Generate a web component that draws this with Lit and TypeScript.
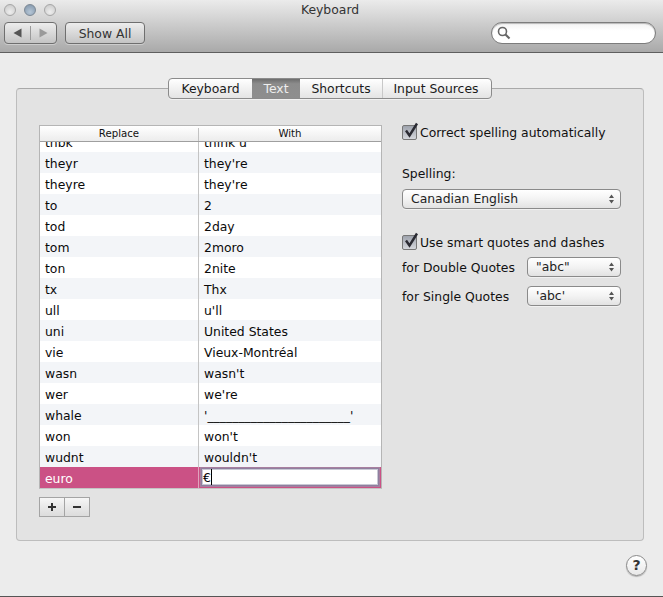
import { LitElement, html, css, svg } from "lit";
import { customElement } from "lit/decorators.js";

const rows: [string, string][] = [
  ["thbk", "think u"], ["theyr", "they're"], ["theyre", "they're"], ["to", "2"], ["tod", "2day"],
  ["tom", "2moro"], ["ton", "2nite"], ["tx", "Thx"], ["ull", "u'll"], ["uni", "United States"],
  ["vie", "Vieux-Montréal"], ["wasn", "wasn't"], ["wer", "we're"], ["whale", "'_______________________'"],
  ["won", "won't"], ["wudnt", "wouldn't"],
];

const stepper = svg`<svg class="step" width="7" height="12" viewBox="0 0 7 12"><path d="M3.5 1.5 L6 5 H1Z M3.5 10.5 L1 7 H6Z" fill="#555"/></svg>`;
const check = svg`<svg class="check" width="18" height="18" viewBox="0 0 18 18"><path d="M4 8.5 L7.5 13.5 L15 1.5" fill="none" stroke="#2b2b33" stroke-width="2.4"/></svg>`;

@customElement("app-root")
export class AppRoot extends LitElement {
  static styles = css`
    :host { display: flex; flex-direction: column; width: 663px; height: 597px; background: #ececec; overflow: hidden;
      font-family: "DejaVu Sans", "Noto Sans", sans-serif; font-size: 12.4px; color: #111; box-sizing: border-box; border-bottom: 1px solid #555; }
    * { box-sizing: border-box; }
    .titlebar { height: 53px; flex: none; background: linear-gradient(#ebebeb, #d4d4d4 35%, #a9a9a9); border-bottom: 1px solid #5f5f5f; position: relative; display: flex; flex-direction: column; padding: 2px 7px 0 4px; }
    .top { height: 20px; display: flex; align-items: center; position: relative; }
    .lights { display: flex; gap: 8px; margin-top: -5px; }
    .light { width: 12px; height: 12px; border-radius: 50%; border: 1px solid #a6a6a6; background: radial-gradient(circle at 50% 70%, #eeeeee, #c6c6c6); }
    .light.mid { background: radial-gradient(circle at 50% 70%, #b5c6d6, #7f93a8); border-color: #7c8894; }
    .title { position: absolute; left: 0; right: 0; top: 0; text-align: center; font-size: 12.4px; line-height: 15px; color: #333; }
    .tools { display: flex; align-items: center; height: 22px; }
    .tbtn { height: 22px; border: 1px solid #6f6f6f; border-radius: 4px; background: linear-gradient(#ededed, #c4c4c4); box-shadow: 0 1px 0 rgba(255,255,255,.35); display: flex; align-items: center; justify-content: center; color: #333; }
    .nav { width: 53px; margin-right: 8px; }
    .nav svg { flex: 1; }
    .nav i { width: 1px; height: 14px; background: #9a9a9a; }
    .show { width: 80px; }
    .search { margin-left: auto; width: 165px; height: 22px; border: 1px solid #7c7c7c; border-radius: 11px; background: linear-gradient(#f2f2f2, #fff 40%); box-shadow: inset 0 1px 1px rgba(0,0,0,.25); display: flex; align-items: center; padding-left: 5px; }
    .main { flex: 1; padding: 25px 19px 0 16px; display: flex; flex-direction: column; }
    .tabs { align-self: center; height: 21px; display: flex; position: relative; z-index: 1; border: 1px solid #8b8b8b; border-radius: 4px; background: linear-gradient(#fff, #f1f1f1 50%, #e4e4e4); box-shadow: 0 1px 0 rgba(255,255,255,.5); line-height: 19px; }
    .tab { text-align: center; color: #1a1a1a; border-left: 1px solid #c8c8c8; }
    .tab:first-child { border-left: none; }
    .tab.on { background: linear-gradient(#6d6d6d, #8c8c8c 25%, #8e8e8e); color: #eee; border-left: none; }
    .tab.on + .tab { border-left: none; }
    .t1 { width: 83px; } .t2 { width: 48px; } .t3 { width: 82px; } .t4 { width: 109px; padding-right: 2px; }
    .panel { height: 453px; margin-top: -11px; background: #e3e3e3; border: 1px solid #bdbdbd; border-top-color: #a9a9a9; border-radius: 4px; padding: 36px 22px 0 22px; display: flex; }
    .left { width: 343px; flex: none; margin-right: 20px; }
    .table { height: 364px; border: 1px solid #b5b5b5; border-bottom-color: #c4c4c4; background: #fff; display: flex; flex-direction: column; overflow: hidden; }
    .thead { height: 16px; flex: none; display: grid; grid-template-columns: 158px 1fr; background: linear-gradient(#fff, #ececec); border-bottom: 1px solid #9f9f9f; font-size: 10.2px; line-height: 15px; text-align: center; }
    .thead div + div { border-left: 1px solid #c2c2c2; height: 13px; margin-top: 2px; line-height: 12px; }
    .body { flex: 1; min-height: 0; overflow: hidden; display: flex; flex-direction: column; justify-content: flex-end; }
    .row { height: 21px; flex: none; display: grid; grid-template-columns: 158px 1fr; line-height: 21px; color: #0a0a0a; background: #fff; }
    .row.alt { background: #f3f5f8; }
    .row div { padding: 1px 0 0 5px; white-space: nowrap; }
    .row div + div { border-left: 1px solid #c4c4c4; }
    .row.sel { background: #cb5185; color: #fff; }
    .row.sel div + div { border-left: 1px solid #e0a3bd; padding: 0 1px 1px 1px; }
    .edit { display: block; height: 20px; border: 2px solid #8f7f9f; outline: 1px solid #a77f9f; outline-offset: -1px; background: #fff; color: #000; line-height: 17px; padding-left: 1px; box-shadow: inset 0 0 0 1px #c8c8d4; }
    .edit b { display: inline-block; width: 1px; height: 16px; background: #000; vertical-align: top; font-weight: normal; }
    .pm { display: inline-flex; margin-top: 8px; border: 1px solid #a4a4a4; height: 20px; background: linear-gradient(#f6f6f6, #e8e8e8 50%, #dcdcdc); }
    .pm div { width: 24px; display: flex; align-items: center; justify-content: center; }
    .pm div + div { border-left: 1px solid #a4a4a4; width: 25px; }
    .right { width: 219px; flex: none; margin-top: -2px; }
    .cb { display: flex; align-items: center; height: 18px; gap: 3px; }
    .box { width: 15px; height: 15px; border: 1px solid #777; border-radius: 2px; background: linear-gradient(#9ea3ad, #d5d7dc); position: relative; flex: none; }
    .check { position: absolute; left: -1px; top: -4px; }
    .spell { margin-top: 25px; height: 16px; line-height: 16px; }
    .sel-box { height: 20px; border: 1px solid #8a8a8a; border-radius: 4px; background: linear-gradient(#fff, #f3f3f3 50%, #e2e2e2); box-shadow: 0 1px 0 rgba(255,255,255,.5); display: flex; align-items: center; padding: 0 5px 0 8px; justify-content: space-between; line-height: 18px; color: #222; }
    .full { margin-top: 7px; }
    .cb.second { margin-top: 24px; }
    .q { display: flex; align-items: center; justify-content: space-between; height: 20px; margin-top: 6px; }
    .q + .q { margin-top: 9px; }
    .q .sel-box { width: 94px; }
    .foot { display: flex; justify-content: flex-end; padding-top: 14px; margin-right: -3px; }
    .help { width: 21px; height: 21px; border-radius: 50%; border: 1px solid #8a8a8a; background: linear-gradient(#fff, #e8e8e8); box-shadow: 0 1px 1px rgba(0,0,0,.25); text-align: center; line-height: 19px; font-weight: bold; font-size: 14px; color: #333; }
  `;

  render() {
    return html`
      <div class="titlebar">
        <div class="top">
          <div class="lights"><span class="light"></span><span class="light mid"></span><span class="light"></span></div>
          <div class="title">Keyboard</div>
        </div>
        <div class="tools">
          <div class="tbtn nav">
            <svg width="9" height="10" viewBox="0 0 9 10"><path d="M8.5 0.5 V9.5 L0.5 5Z" fill="#555"/></svg>
            <i></i>
            <svg width="9" height="10" viewBox="0 0 9 10"><path d="M0.5 0.5 V9.5 L8.5 5Z" fill="#9a9a9a"/></svg>
          </div>
          <div class="tbtn show">Show All</div>
          <div class="search">
            <svg width="14" height="14" viewBox="0 0 14 14"><circle cx="5.5" cy="5.5" r="4" fill="none" stroke="#666" stroke-width="1.6"/><path d="M8.5 8.5 L12.5 12.5" stroke="#666" stroke-width="2.2"/></svg>
          </div>
        </div>
      </div>
      <div class="main">
        <div class="tabs">
          <div class="tab t1">Keyboard</div>
          <div class="tab on t2">Text</div>
          <div class="tab t3">Shortcuts</div>
          <div class="tab t4">Input Sources</div>
        </div>
        <div class="panel">
          <div class="left">
            <div class="table">
              <div class="thead"><div>Replace</div><div>With</div></div>
              <div class="body">
                ${rows.map((r, i) => html`<div class="row ${i % 2 ? "alt" : ""}"><div>${r[0]}</div><div>${r[1]}</div></div>`)}
                <div class="row sel"><div>euro</div><div><span class="edit">€<b></b></span></div></div>
              </div>
            </div>
            <div class="pm">
              <div><svg width="10" height="10" viewBox="0 0 10 10"><path d="M5 1V9M1 5H9" stroke="#333" stroke-width="2"/></svg></div>
              <div><svg width="10" height="10" viewBox="0 0 10 10"><path d="M1 5H9" stroke="#333" stroke-width="2"/></svg></div>
            </div>
          </div>
          <div class="right">
            <div class="cb"><span class="box">${check}</span><span>Correct spelling automatically</span></div>
            <div class="spell">Spelling:</div>
            <div class="sel-box full"><span>Canadian English</span>${stepper}</div>
            <div class="cb second"><span class="box">${check}</span><span>Use smart quotes and dashes</span></div>
            <div class="q"><span>for Double Quotes</span><div class="sel-box"><span>"abc"</span>${stepper}</div></div>
            <div class="q"><span>for Single Quotes</span><div class="sel-box"><span>'abc'</span>${stepper}</div></div>
          </div>
        </div>
        <div class="foot"><div class="help">?</div></div>
      </div>
    `;
  }
}
